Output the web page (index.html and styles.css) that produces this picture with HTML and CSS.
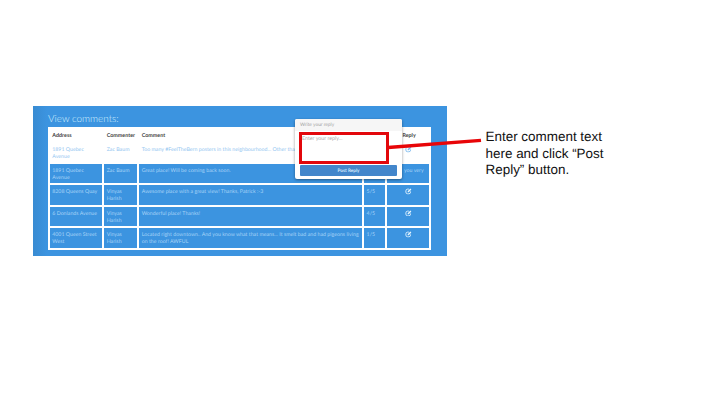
FILE: index.html
```
<!DOCTYPE html>
<html lang="en">
<head>
<meta charset="utf-8">
<title>View comments</title>
<link rel="stylesheet" href="styles.css">
</head>
<body>
<svg class="defs" width="0" height="0"><symbol id="edit" viewBox="0 0 14 14"><path d="M11.500 7v1.500A3.700 3.700 0 0 1 7.800 12H5.500A3.700 3.700 0 0 1 1.800 8.300V6A3.700 3.700 0 0 1 5.500 2.300H8" fill="none" stroke="currentColor" stroke-width="1.800"/><path d="M5.500 9V6.500L11 1l2.200 2.200L7.700 9z" fill="currentColor"/></symbol></svg>
<main class="slide">
  <section class="panel">
    <h1 class="title">View comments:</h1>
    <div class="table">
      <div class="row head"><div>Address</div><div>Commenter</div><div>Comment</div><div></div><div class="reply">Reply</div></div>
      <div class="row light"><div>1891 Quebec<br>Avenue</div><div>Zac Baum</div><div>Too many #FeelTheBern posters in this neighbourhood... Other tha</div><div></div><div class="reply"><svg><use href="#edit"/></svg></div></div>
      <div class="row"><div>1891 Quebec<br>Avenue</div><div>Zac Baum</div><div>Great place! Will be coming back soon.</div><div></div><div class="answer">you very</div></div>
      <div class="row"><div>8208 Queens Quay</div><div>Vinyas<br>Harish</div><div>Awesome place with a great view! Thanks, Patrick :-3</div><div>5/5</div><div class="reply"><svg><use href="#edit"/></svg></div></div>
      <div class="row"><div>6 Donlands Avenue</div><div>Vinyas<br>Harish</div><div>Wonderful place! Thanks!</div><div>4/5</div><div class="reply"><svg><use href="#edit"/></svg></div></div>
      <div class="row"><div>4001 Queen Street<br>West</div><div>Vinyas<br>Harish</div><div>Located right downtown.. And you know what that means... It smelt bad and had pigeons living<br>on the roof! AWFUL</div><div>1/5</div><div class="reply"><svg><use href="#edit"/></svg></div></div>
    </div>
    <div class="popover">
      <div class="pop-title">Write your reply</div>
      <div class="pop-body"><div class="input">Enter your reply...</div><div class="button">Post Reply</div></div>
    </div>
  </section>
  <p class="note">Enter comment text<br>here and click “Post<br>Reply” button.</p>
  <svg class="callout" viewBox="0 0 720 405"><path d="M388 147.500L481 140.400" stroke="#e80508" stroke-width="3.400"/><rect x="300.500" y="133.500" width="87" height="29" fill="none" stroke="#e2070b" stroke-width="3"/></svg>
</main>
</body>
</html>
```
FILE: styles.css
```
* { box-sizing: border-box; }
body { margin: 0; background: #fff; text-rendering: geometricPrecision; }
.defs { display: block; }
.slide { position: relative; display: flex; width: 720px; height: 405px; padding: 106px 0 0 33px; overflow: hidden; }
.panel { position: relative; width: 414px; height: 150px; padding: 5px 16px 0 15px; background: linear-gradient(90deg, #388bd2, #3c94e0 14px); font-family: Lato, sans-serif; }
.title { margin: 0; height: 16px; font-size: 9.950px; line-height: 16px; font-weight: 300; color: #d5f1ff; white-space: nowrap; }
.table { display: grid; grid-template-rows: 15.200px 18px repeat(4, 19.800px); row-gap: 1.700px; width: 383px; height: 122.700px; padding: 0 1.700px 1.700px; background: #fff; }
.row { display: grid; grid-template-columns: 52.700px 33.400px 223.200px 21.200px 1fr; column-gap: 1.700px; font-size: 5.250px; line-height: 7.200px; color: #a6d3f7; white-space: nowrap; }
.row > div { padding: 4px 0 0 2.600px; background: #3c94e0; min-width: 0; }
.row.head > div { background: #fff; color: #444; font-weight: 700; font-size: 5.400px; padding-top: 5.500px; }
.row.light > div { background: #fff; color: #94c6f1; padding-top: 3px; }
.row > .reply { text-align: center; padding: 3px 0 0; }
.row.light > .reply { padding-top: 2px; }
.row.head > .reply { padding-left: 2px; }
.row > .answer { padding-left: 17px; }
.reply svg { display: inline-block; width: 6.800px; height: 6.800px; color: #e6f6ff; vertical-align: -1px; }
.light .reply svg { color: #77b8ee; }
.popover { position: absolute; left: 262px; top: 13px; width: 107px; height: 60px; background: #fff; border-radius: 2px; box-shadow: 0 1px 3px rgba(0,0,0,.4); overflow: hidden; }
.pop-title { height: 12px; padding-left: 5px; background: #f6f6f6; font-size: 4.800px; line-height: 12.600px; color: #a0a0a0; }
.pop-body { padding: 2px 5px 0; }
.input { height: 32px; padding: 3px 0 0 2px; font-size: 5.300px; line-height: 7px; color: #aaa; }
.button { height: 11px; border-radius: 1px; background: #4386cb; color: #d5e8fa; font-size: 4.700px; line-height: 11.400px; font-weight: 700; text-align: center; }
.note { margin: 23px 0 0 38.500px; font-family: "Liberation Sans", Arial, sans-serif; font-size: 13.450px; line-height: 16.600px; color: #111; white-space: nowrap; }
.callout { position: absolute; left: 0; top: 0; width: 720px; height: 405px; }
```
